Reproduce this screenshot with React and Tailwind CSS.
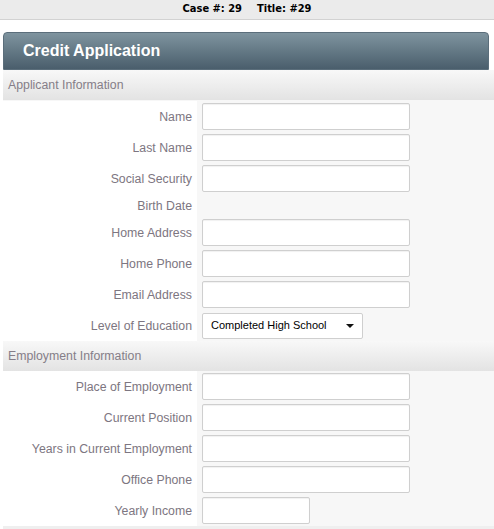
import React from "react";

const Input = ({ w = "w-[208px]" }) => (
  <div className={`h-[27px] ${w} bg-white border border-[#cfcfcf] rounded-[2px] shadow-[inset_0_1px_1px_rgba(0,0,0,0.06)]`} />
);

const Row = ({ label, children, h = "h-[31px]" }) => (
  <div className="flex">
    <div className={`w-[194px] bg-white flex items-center justify-end pr-[5px] pt-[2px] ${h}`}>
      <span className="text-[12.3px] text-[#7d7681] whitespace-nowrap">{label}</span>
    </div>
    <div className={`flex-1 pl-[5px] flex items-center ${h}`}>{children}</div>
  </div>
);

const Section = ({ title }) => (
  <div className="h-[30px] bg-gradient-to-b from-[#f8f8f8] to-[#e3e3e3] flex items-center pl-[5px] pt-[1px]">
    <span className="text-[12.3px] text-[#857e88]">{title}</span>
  </div>
);

export default function App() {
  return (
    <div className="w-[494px] h-[529px] bg-white overflow-hidden" style={{ fontFamily: '"Liberation Sans", Arial, sans-serif' }}>
      <div className="h-[20px] bg-[#ebebeb] border-b border-[#d2d2d2] flex items-center justify-center">
        <span className="text-[11px] font-bold text-black" style={{ fontFamily: '"DejaVu Sans Condensed", "DejaVu Sans", sans-serif' }}>
          Case #: 29<span className="inline-block w-[15px]" />Title: #29
        </span>
      </div>
      <div className="pl-[3px] pt-[12px]">
        <div className="mr-[5px] h-[38px] rounded-t-[4px] bg-gradient-to-b from-[#7f949f] to-[#4a5e6c] border border-[#5b6e7b] flex items-center pl-[19px]">
          <span className="text-white font-bold text-[16px]">Credit Application</span>
        </div>
        <div className="bg-[#f7f7f7]">
          <Section title="Applicant Information" />
          <div className="flex flex-col pt-[1px]">
            <Row label="Name"><Input /></Row>
            <Row label="Last Name"><Input /></Row>
            <Row label="Social Security"><Input /></Row>
            <Row label="Birth Date" h="h-[23px]" />
            <Row label="Home Address"><Input /></Row>
            <Row label="Home Phone"><Input /></Row>
            <Row label="Email Address"><Input /></Row>
            <Row label="Level of Education" h="h-[31px]">
              <div className="h-[26px] w-[161px] bg-white border border-[#cfcfcf] rounded-[2px] flex items-center justify-between pl-[8px] pr-[8px]">
                <span className="text-[11px] text-black">Completed High School</span>
                <svg width="8" height="4" viewBox="0 0 8 4"><path d="M0 0 L8 0 L4 4 Z" fill="#111" /></svg>
              </div>
            </Row>
          </div>
          <Section title="Employment Information" />
          <div className="flex flex-col">
            <Row label="Place of Employment"><Input /></Row>
            <Row label="Current Position"><Input /></Row>
            <Row label="Years in Current Employment"><Input /></Row>
            <Row label="Office Phone"><Input /></Row>
            <Row label="Yearly Income"><Input w="w-[108px]" /></Row>
          </div>
          <div className="h-[6px] bg-[#efefef]" />
        </div>
      </div>
    </div>
  );
}
